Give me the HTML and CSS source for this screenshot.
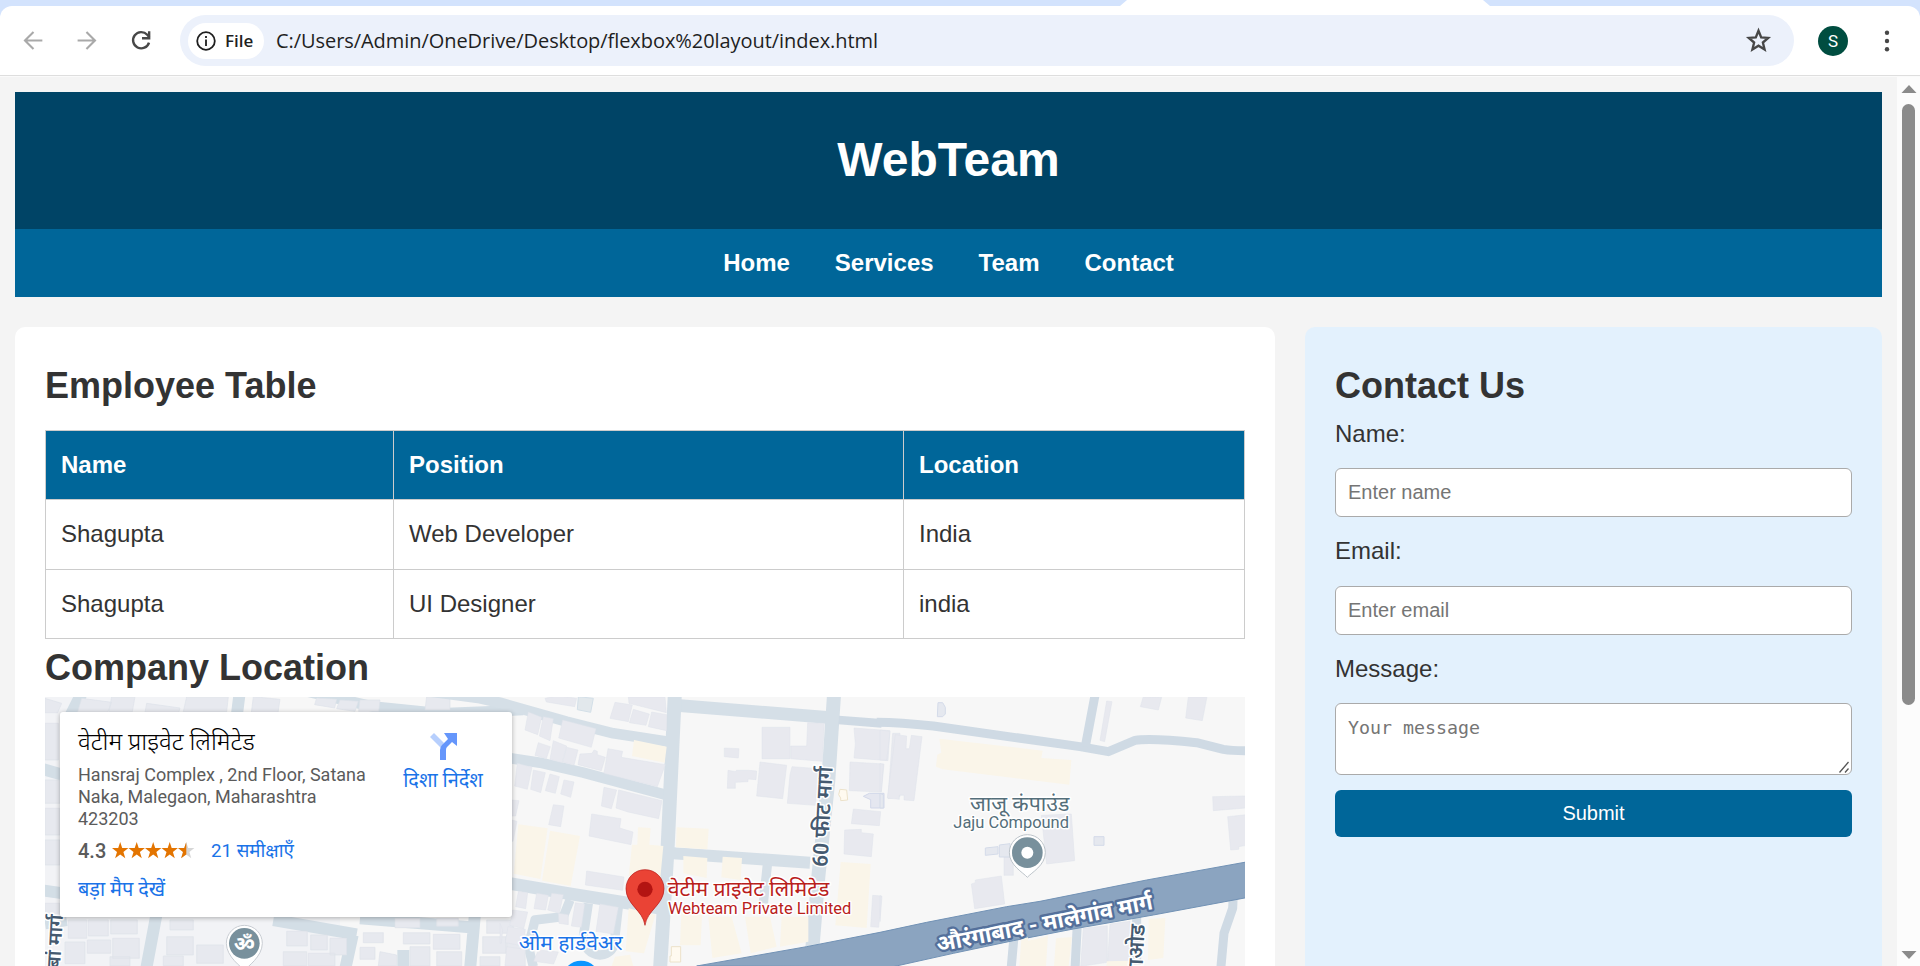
FILE: index.html
```html
<!DOCTYPE html>
<html lang="en">
<head>
<meta charset="utf-8">
<title>WebTeam</title>
<link rel="stylesheet" href="styles.css">
</head>
<body>
<div class="browser">
  <div class="tabstrip"><div class="active-tab"></div></div>
  <div class="toolbar">
    <svg class="nav-icon" viewBox="0 0 24 24"><path d="M20.500 12H4M12 3.800L3.800 12l8.200 8.200" fill="none" stroke="#a9a9a9" stroke-width="2"/></svg>
    <svg class="nav-icon" viewBox="0 0 24 24"><path d="M2.500 12H19M11 3.800l8.200 8.200-8.200 8.200" fill="none" stroke="#a9a9a9" stroke-width="2"/></svg>
    <svg class="nav-icon" viewBox="0 0 24 24"><path d="M19.200 14A7.800 7.800 0 1 1 17.500 6.500l2 2.300" fill="none" stroke="#474747" stroke-width="2.300"/><path d="M20.500 3v8h-8V8.700h5.700V3z" fill="#474747"/></svg>
    <div class="omnibox">
      <div class="chip">
        <svg class="info" viewBox="0 0 20 20"><circle cx="10" cy="10" r="8.800" fill="none" stroke="#1f1f1f" stroke-width="1.800"/><path d="M10 8.500v6.500M10 5v2" stroke="#1f1f1f" stroke-width="1.800"/></svg>
        <span>File</span>
      </div>
      <span class="url">C:/Users/Admin/OneDrive/Desktop/flexbox%20layout/index.html</span>
      <svg class="star" viewBox="0 0 24 24"><path d="M12 3.300l2.400 5.900 6.200.5-4.700 4.100 1.500 6.100-5.400-3.300-5.400 3.300 1.500-6.100-4.700-4.100 6.200-.5z" fill="none" stroke="#474747" stroke-width="2.100"/></svg>
    </div>
    <div class="avatar">S</div>
    <svg class="dots" viewBox="0 0 6 24"><g fill="#474747"><circle cx="3" cy="3.700" r="2.200"/><circle cx="3" cy="12" r="2.200"/><circle cx="3" cy="20.300" r="2.200"/></g></svg>
  </div>
</div>
<div class="viewport">
  <div class="page">
    <header class="site-header"><h1>WebTeam</h1></header>
    <nav class="site-nav"><a>Home</a><a>Services</a><a>Team</a><a>Contact</a></nav>
    <div class="columns">
      <main class="content">
        <h2>Employee Table</h2>
        <table>
          <colgroup><col class="c1"><col class="c2"><col class="c3"></colgroup>
          <tr><th>Name</th><th>Position</th><th>Location</th></tr>
          <tr><td>Shagupta</td><td>Web Developer</td><td>India</td></tr>
          <tr><td>Shagupta</td><td>UI Designer</td><td>india</td></tr>
        </table>
        <h2>Company Location</h2>
        <div class="map">
          <svg class="map-art" viewBox="0 0 1200 269" width="1200" height="269">
            <rect width="1200" height="269" fill="#f7f7f7"/>
            <!-- west part -->
            <g transform="translate(-5 -7) scale(.33333)">
              <path d="M15 0H540V70H60V828H15zM60 670H900V828H15z" fill="#f2f3f6"/>
              <g fill="none" stroke="#d3dee6" stroke-width="36">
                <path d="M130 0L90 80M600 0L590 80M0 235L70 255M0 600L70 610M350 670L318 840M700 690L950 733M938 735L915 840M960 685L1290 712M1305 670L1290 840M1090 780V840M15 700L80 690"/>
                <path d="M760 -5L1000 50L1200 70L1450 60" stroke-width="32"/>
              </g>
              <g fill="#e7e9ef" stroke="#dee2ea" stroke-width="2">
                <path d="M125 25l90 12-12 30h-90zM215 20h70l-8 45h-70zM320 40l100 14-4 14H315zM440 20h125l-5 45H430zM640 20l80 8-6 40h-80zM830 24l60 4-6 26-60-10zM900 30l55 4-10 30-55-8zM960 30h60l-4 34h-60zM1160 20h70v40h-75zM15 25l50 15-12 28H15zM15 100h40v110H15zM15 270h45v70H15zM15 355h45v80H15zM15 450h45v75H15zM15 640h45v40H15z"/>
                <path d="M85 690h55v55H85zM145 690h60v48h-60zM212 690h80v42h-80zM75 756h60v65H75zM142 750h70v40h-70zM218 745h80v60h-80zM210 800h60v28h-60zM390 690h70v30h-70zM380 740h80v55h-80zM470 765h80v55h-80zM370 798h60v30h-60zM740 724h62v44h-62zM812 735h50v45h-50zM870 745h50v50h-50zM730 785h70v43h-70zM805 790h80v38h-80zM970 728h60v30h-60zM1065 685h75v28h-75zM1190 685h65v24h-65zM1090 728h80v34h-80zM1180 733h80v45h-80zM1110 770h60v58h-60zM1190 785h75v43h-75zM1340 690h80v40h-80zM1328 740h70v50h-70zM1400 735h60v55h-60zM1320 800h60v28h-60zM960 772h45v36h-45zM1020 785l50 10v33h-55z"/>
              </g>
            </g>
            <!-- centre -->
            <g transform="translate(455 -7) scale(.33333)">
              <g fill="none" stroke="#d5dfe7" stroke-linejoin="round">
                <path d="M-280 -5L-60 25L0 38L200 95L340 130L505 155" stroke-width="32"/>
                <path d="M0 200L120 218L250 248L495 314" stroke-width="32"/>
                <path d="M0 575L200 610L480 655" stroke-width="38"/>
                <path d="M540 47L980 82" stroke-width="38"/>
                <path d="M520 490L930 518" stroke-width="36"/>
                <path d="M802 525L790 640M265 640L250 740Q255 790 300 795Q345 790 345 740L355 650M100 830L85 770L105 690L190 680L210 630" stroke-width="28"/>
                <path d="M525 0L503 470L480 840" stroke-width="42"/>
                <path d="M1003 0L985 270L955 560L937 775" stroke-width="42"/>
                <path d="M1016 90L1145 100" stroke="#cfdae4" stroke-width="26"/>
              </g>
              <g fill="#e8e9ef" stroke="#dfe2ea" stroke-width="1.500">
                <path d="M135 25l40-8 55 8-6 25-85-14zM345 37l52 8-12 50-55-10zM385 20h110l4 48-112-28zM400 58l48 14-10 34-50-8zM455 66l45 8v48l-55-12zM85 66l40 16-12 52-38-14zM130 80l30 6-10 66-32-14zM188 90l100 26-14 56-98-28zM115 158l36 12-12 36-34-10zM160 152l40 16-14 50-36-10zM200 172l34 8-12 46-34-10zM240 192l36-2 6-10 10 4v10l24 8-12 40-70-18zM324 176l44 8-4 18 132 22-24 66-160-40zM52 220l44 12-14 66-38-10zM100 240l36 8-14 60-30-10zM150 252l28 8-12 50-30-8zM192 270l30 6-10 46-30-10zM312 292l38 8-16 56-30-8zM356 300l130 32-10 54-92-20-36-12zM160 344l32 4-10 62-36-6zM275 372l88 14-4 28 40 12-6 38-126-26zM260 543l112 18-4 40-112-16zM35 330l22 2-10 46H35zM35 390l16 4-12 60h-4zM55 604l28 4-6 48-30-6zM110 610l35 6-8 44-35-4zM155 610l35 4-12 56-35-10zM226 638l28 4-10 70-30-4zM300 642l55 10-15 80-52-8zM38 660l45 6-12 50-42-10zM24 710l52 8-6 50-54-10zM20 770l56 8v50H15zM115 780l60 6-14 36-60-8zM175 670l30 4v30l-28-4zM0 700l8 20-4 40H0z"/>
                <path d="M786 112h84v94h-84zM923 98l50 2-6 114-95-8v-38h48zM673 174l44 2-2 28-42-4zM684 241l25 4v-4h37l24 2-2 26-24-2v8l-38 2v18h-24zM780 216l80 10-12 100-78-8zM876 230l80 6-10 110-84-6 8-86zM1062 114l108 8-6 90-102-8 4-42zM1050 216l102 6-8 84-96-4zM1178 130h22v190l-36 6zM1060 357l82 8-4 42-84-6zM1034 420l50-2v10l36 4-6 68-82-8zM1118 616l26 2-8 94-24-2z"/>
              </g>
              <path d="M402 150l98 20-6 48-98-20zM55 403l88 12-22 152-80-16zM150 422l90 16-28 150-86-16zM414 412l38 2-4 50 42 4-14 150-90-60 10-94h16zM530 412l96 4-4 62-94-6zM550 498l72 6-2 60-70-14zM668 500l58 4-4 66-58-8zM386 655l80 20-34 115-55-6zM544 670l62 4-4 92h-62zM625 680h70l30 110-88 14zM735 680h75l20 90-78 20zM845 680h80v75l-85 15zM1022 516l90 6-12 192-94-8zM345 800l45-6 10 34H335z" fill="#faf5e9"/>
              <g fill="#fffaf0" stroke="#ece2ca" stroke-width="3"><path d="M514 770h28v46h-32v-18h4zM1020 298l20 2 3 30-21 2v-8l-6-10z"/></g>
              <path d="M1108 310h44v44h-40v-25l-22-10z" fill="#e5e7f0" stroke="#d2d8e9" stroke-width="3"/>
              <path d="M235 20l45 5-8 42-40-8z" fill="#e2e8ec" stroke="#d3dfe8" stroke-width="3"/>
            </g>
            <!-- east part -->
            <g transform="translate(835 -7) scale(.33333)">
              <g fill="none" stroke="#cfdae4" stroke-width="27" stroke-linejoin="round">
                <path d="M-10 97Q60 98 160 108L600 170L685 185L765 151Q810 143 950 158L1030 178Q1060 183 1110 182"/>
                <path d="M648 0L616 170M402 740L393 840M592 700L585 840M770 660V840M1060 610L1058 655L1032 730L1022 840"/>
              </g>
              <path d="M-550 828L-220 770L0 727L140 697L380 650L480 634L800 570L1110 514V621L820 675L580 717L400 752L220 790L40 830z" fill="#8ba4c0" stroke="#7192b5" stroke-width="3"/>
              <g fill="#e8e9ef" stroke="#dfe2ea" stroke-width="1.500"><path d="M0 120l30 4-10 86H0zM46 134l34 4-2 38h10l6-40 32 4-24 192-30-2v-14h-14v12l-36-4zM0 220l10 4-6 80H0zM484 376l90-4 10 140-84 10zM274 582l12-4v-8l78-12 10 84-90 14zM372 500h28v56h-28zM998 320l100-2v36l-98 8zM1043 380l57-6v92l-24 4v8l-24 2zM790 20l55 2-10 38-54-10zM925 20h56l-14 72-50-8zM680 33l16 2-22 120-14-4zM610 715l72-8v110l-80 12zM690 702l60-8v134h-68zM0 617l6 2-6 76z"/></g>
              <path d="M178 146l310 36-4 22 90 6-6 74-380-46-20-8 4-36 12-6zM424 748l20-6v10l48-10 12-6-6 92h-80zM528 745l48-4-10 87h-44zM806 686l50-2-6 120-46 6zM680 814l80-2v16h-80z" fill="#faf5e9"/>
              <g fill="#e5e8ef" stroke="#d4dbe9" stroke-width="3"><path d="M174 38h14l8 14v20l-8 8h-16zM642 440h30v26h-30zM316 474l38-4v22l-38 4zM358 465l32-4v40h-32zM0 310l10 4v40H0z"/></g>
            </g>
            <!-- markers and labels -->
            <g transform="translate(-5 -7) scale(.33333)" class="label">
              <path d="M613 840c-8-8-54-40-54-80a54 54 0 0 1 108 0c0 40-46 72-54 80z" fill="#fff" stroke="#c8ccd2" stroke-width="3"/>
              <circle cx="613" cy="760" r="46" fill="#78909c"/>
              <text x="581" y="782" font-size="60" font-weight="700" fill="#fff" textLength="64" lengthAdjust="spacingAndGlyphs">ॐ</text>
              <text transform="translate(60 836) rotate(-87)" class="halo road" font-size="58" textLength="162" lengthAdjust="spacingAndGlyphs">बां मार्ग</text>
            </g>
            <g transform="translate(455 -7) scale(.33333)" class="label">
              <path d="M435 706c-6-45-57-62-57-110a57 57 0 0 1 114 0c0 48-51 65-57 110z" fill="#ea4335" stroke="#b31412" stroke-width="2"/>
              <circle cx="435" cy="598" r="23" fill="#b31412"/>
              <text x="503" y="618" class="halo red" font-size="60" textLength="485" lengthAdjust="spacingAndGlyphs">वेटीम प्राइवेट लिमिटेड</text>
              <text x="504" y="671" class="halo red latin" font-size="47" textLength="550" lengthAdjust="spacingAndGlyphs">Webteam Private Limited</text>
              <text x="56" y="780" class="halo blue" font-size="60" textLength="312" lengthAdjust="spacingAndGlyphs">ओम हार्डवेअर</text>
              <circle cx="243" cy="868" r="56" fill="#0a95ff"/>
              <text transform="translate(982 532) rotate(-87)" class="halo road" font-size="64" textLength="302" lengthAdjust="spacingAndGlyphs">60 फीट मार्ग</text>
            </g>
            <g transform="translate(835 -7) scale(.33333)" class="label">
              <path d="M442 562c-12-14-54-36-54-74a54 54 0 0 1 108 0c0 38-42 60-54 74z" fill="#fff" stroke="#bcc3c9" stroke-width="3"/>
              <circle cx="442" cy="488" r="46" fill="#78909c"/><circle cx="442" cy="488" r="18" fill="#fff"/>
              <text x="270" y="362" class="halo slate" font-size="60" textLength="298" lengthAdjust="spacingAndGlyphs">जाजू कंपाउंड</text>
              <text x="220" y="415" class="halo slate latin" font-size="49" textLength="347" lengthAdjust="spacingAndGlyphs">Jaju Compound</text>
              <text transform="translate(174 786) rotate(-11.300)" class="highway" font-size="67" textLength="660" lengthAdjust="spacingAndGlyphs">औरंगाबाद - मालेगांव मार्ग</text>
              <text transform="translate(786 862) rotate(-87)" class="halo road" font-size="64" textLength="158" lengthAdjust="spacingAndGlyphs">गाओड</text>
            </g>
          </svg>
          <div class="place">
            <div class="place-info">
              <div class="place-name">वेटीम प्राइवेट लिमिटेड</div>
              <div class="address">Hansraj Complex , 2nd Floor, Satana<br>Naka, Malegaon, Maharashtra<br>423203</div>
              <div class="rating">
                <b>4.3</b>
                <svg class="stars" viewBox="0 0 83 17" width="83" height="17"><defs><path id="st" d="M8.200 0l2 6h6.200l-5 3.900 1.900 6.300-5.100-3.800-5.100 3.800L5 9.900 0 6h6.200z"/><clipPath id="half"><rect x="66" width="8.300" height="17"/></clipPath></defs><g fill="#e37400"><use href="#st"/><use href="#st" x="16.500"/><use href="#st" x="33"/><use href="#st" x="49.500"/><use href="#st" x="66" fill="#d6d6d6"/><g clip-path="url(#half)"><use href="#st" x="66"/></g></g></svg>
                <a class="reviews">21 समीक्षाएँ</a>
              </div>
              <a class="larger">बड़ा मैप देखें</a>
            </div>
            <div class="directions">
              <svg viewBox="0 0 27 27" width="27" height="27"><path d="M0 4L4 0l10 10-3 5z" fill="#b7cffd"/><path d="M10 27V17q0-3 2-5l6-6-4-6h13v13l-5-4-5 5q-1 1-1 3v10z" fill="#6596fb"/></svg>
              <a>दिशा निर्देश</a>
            </div>
          </div>
        </div>
      </main>
      <aside class="contact">
        <h2>Contact Us</h2>
        <form>
          <label>Name:</label>
          <input type="text" placeholder="Enter name">
          <label>Email:</label>
          <input type="email" placeholder="Enter email">
          <label>Message:</label>
          <div class="message">
            <textarea placeholder="Your message"></textarea>
            <svg class="grip" width="10" height="12" viewBox="0 0 10 12"><path d="M.5 11.500L9.500 1M6 11.500l3.500-4" fill="none" stroke="#555" stroke-width="1.300"/></svg>
          </div>
          <button type="button">Submit</button>
        </form>
      </aside>
    </div>
  </div>
  <div class="scrollbar">
    <svg width="16" height="8" viewBox="0 0 16 8"><path d="M8 0l7.500 8H.5z" fill="#8b8b8b"/></svg>
    <div class="thumb"></div>
    <svg class="down" width="16" height="8" viewBox="0 0 16 8"><path d="M8 8L.5 0h15z" fill="#8b8b8b"/></svg>
  </div>
</div>
</body>
</html>
```
FILE: styles.css
```css
* { box-sizing: border-box; }
body {
  margin: 0;
  height: 966px;
  overflow: hidden;
  display: flex;
  flex-direction: column;
  font: 24px/1.6 "Liberation Sans", Arial, sans-serif;
  color: #333;
  background: #f4f4f4;
}
h1, h2 { margin: 0; }
h1 { font-size: 48px; }
h2 { font-size: 36px; }

/* browser frame */
.browser { height: 77px; flex: none; background: #d3e3fd; border-bottom: 1px solid #fafafa; }
.tabstrip { height: 6px; display: flex; justify-content: flex-start; padding-left: 1120px; }
.active-tab {
  width: 370px;
  background: #fff;
  clip-path: polygon(7px 0, 363px 0, 370px 6px, 0 6px);
}
.toolbar {
  height: 70px;
  display: flex;
  align-items: center;
  background: #fff;
  border-bottom: 1px solid #dedede;
  border-radius: 12px 12px 0 0;
  padding: 0 24px 0 21px;
}
.nav-icon { width: 25px; height: 25px; margin-right: 29px; }
.nav-icon:nth-of-type(3) { margin-right: 26px; }
.omnibox {
  width: 1614px;
  height: 51px;
  border-radius: 26px;
  background: #ecf1fb;
  display: flex;
  align-items: center;
  padding: 0 22px 0 8px;
  font-family: "Open Sans", sans-serif;
  color: #1f1f1f;
}
.chip {
  height: 36px;
  width: 76px;
  border-radius: 18px;
  background: #fff;
  display: flex;
  align-items: center;
  gap: 9px;
  padding-left: 8px;
  font-size: 17px;
  font-weight: 600;
}
.info { width: 20px; height: 20px; flex: none; }
.url { margin-left: 12px; font-size: 20px; line-height: 30px; letter-spacing: -.06px; white-space: nowrap; }
.star { width: 27px; height: 27px; margin-left: auto; }
.avatar {
  width: 30px;
  height: 30px;
  border-radius: 50%;
  background: #004d40;
  color: #fff;
  font: 17px/30px Roboto, sans-serif;
  text-align: center;
  margin-left: 24px;
}
.dots { width: 6px; height: 24px; margin-left: 36px; }

/* page */
.viewport { flex: 1; min-height: 0; display: flex; }
.page { flex: 1; padding: 15px; min-width: 0; overflow: hidden; }
.site-header { background: #004466; color: #fff; text-align: center; padding: 30px; }
.site-nav {
  background: #006699;
  color: #fff;
  font-weight: bold;
  display: flex;
  justify-content: center;
  gap: 45px;
  padding: 15px;
}
.columns { display: flex; gap: 30px; margin-top: 30px; height: 1000px; }
.content { width: 1260px; background: #fff; border-radius: 10px; padding: 30px; }
.contact { flex: 1; background: #e3f1fd; border-radius: 10px; padding: 30px; }

table { width: 1199.500px; table-layout: fixed; border-collapse: collapse; margin-top: 15px; }
.c1 { width: 348px; }
.c2 { width: 510px; }
th, td { border: 1px solid #ccc; padding: 15px; text-align: left; }
th { background: #006699; color: #fff; }

form { display: flex; flex-direction: column; }
input, textarea {
  width: 100%;
  height: 49px;
  padding: 12px;
  border: 1px solid #aaa;
  border-radius: 6px;
  font: 20px "Liberation Sans", Arial, sans-serif;
  background: #fff;
}
input, .message { margin: 15px 0; }
.message { position: relative; height: 72px; }
textarea {
  display: block;
  height: 72px;
  resize: none;
  font: 18.300px/23px "DejaVu Sans Mono", monospace;
}
.grip { position: absolute; right: 3px; bottom: 2px; }
::placeholder { color: #757575; }
button {
  height: 47px;
  border: 0;
  border-radius: 6px;
  background: #006699;
  color: #fff;
  font: 20px "Liberation Sans", Arial, sans-serif;
}

/* map */
.map { position: relative; height: 269px; width: 1200px; overflow: hidden; }
.map-art { display: block; }
.label { font-family: Roboto, "Noto Sans", sans-serif; }
.halo { stroke: #fff; stroke-width: 9px; paint-order: stroke; stroke-linejoin: round; }
.red { fill: #b9201b; }
.blue { fill: #1a73e8; }
.slate { fill: #546e7a; }
.road { fill: #455a70; font-weight: 600; }
.highway { fill: #fff; stroke: #54709b; stroke-width: 14px; paint-order: stroke; stroke-linejoin: round; font-weight: 700; }
.place {
  position: absolute;
  left: 15px;
  top: 15px;
  width: 452px;
  height: 205px;
  display: flex;
  justify-content: space-between;
  background: #fff;
  border-radius: 3px;
  box-shadow: 0 1px 5px rgba(0, 0, 0, .3);
  padding: 14px 28px 0 18px;
  font: 18px/22px Roboto, "Noto Sans", sans-serif;
  color: #5b5b5b;
}
.place a { color: #1a73e8; white-space: nowrap; }
.place-name { font-size: 24.300px; font-weight: 300; line-height: 31px; color: #000; white-space: nowrap; }
.address { margin-top: 7px; }
.rating { display: flex; align-items: center; height: 24px; margin-top: 9px; }
.rating b { font-size: 20px; font-weight: 500; width: 34px; }
.stars { margin-right: 16px; }
.reviews { font-size: 18.700px; }
.larger { display: block; margin-top: 16px; font-size: 19.900px; }
.directions { width: 82px; display: flex; flex-direction: column; align-items: center; padding-top: 7px; }
.directions a { margin-top: 10px; font-size: 19.900px; }

.scrollbar {
  width: 23px;
  background: #fcfcfc;
  display: flex;
  flex-direction: column;
  align-items: center;
  padding: 8px 0 7px;
}
.thumb { width: 13px; height: 601px; margin-top: 11px; border-radius: 7px; background: #8b8b8b; }
.down { margin-top: auto; }
```
